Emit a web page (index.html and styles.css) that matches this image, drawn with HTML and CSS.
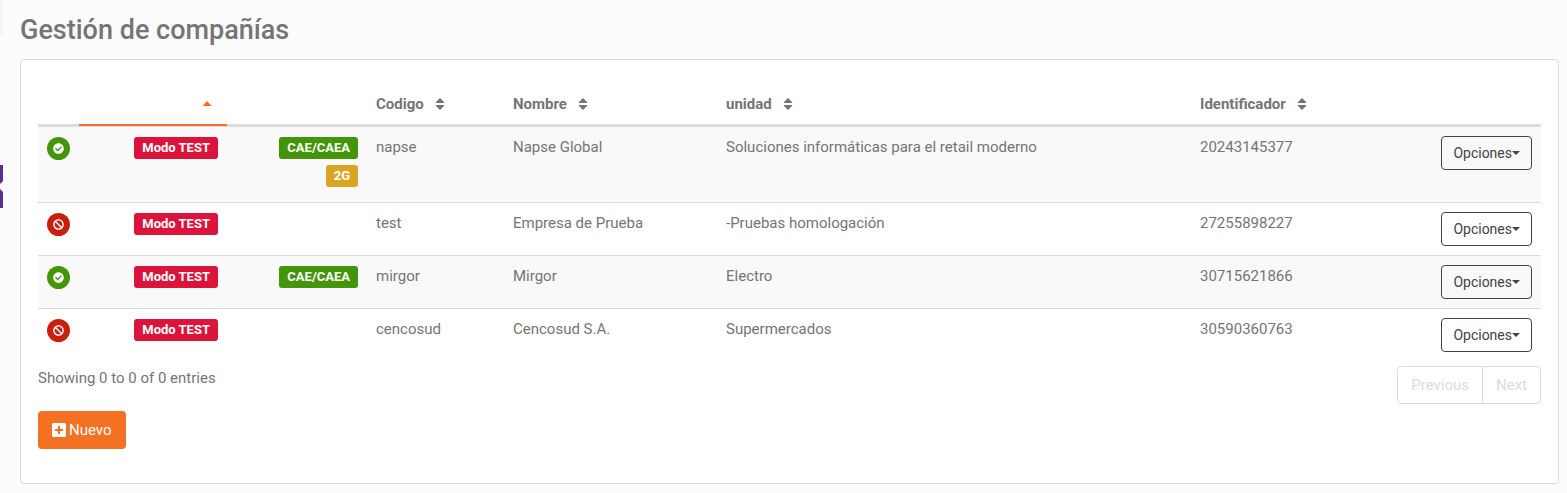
FILE: index.html
```html
<!DOCTYPE html>
<html lang="es">
<head>
<meta charset="utf-8">
<meta name="viewport" content="width=device-width, initial-scale=1">
<title>Gestión de compañías</title>
<link rel="stylesheet" href="styles.css">
</head>
<body>
<svg class="defs" width="0" height="0" aria-hidden="true">
  <symbol id="sort" viewBox="0 0 10 12"><path d="M5 0 9 4q.8 1.100-.4 1.100H1.400Q.2 5.100 1 4zM1.400 6.900h7.200q1.200 0 .4 1.100L5 12 1 8q-.8-1.100.4-1.100z"/></symbol>
  <symbol id="check" viewBox="0 0 512 512"><path d="M504 256c0 137-111 248-248 248S8 393 8 256 119 8 256 8s248 111 248 248zM227 387l184-184c6-6 6-16 0-22l-22-23c-7-6-17-6-23 0L216 308l-70-70c-6-6-16-6-23 0l-22 23c-7 6-7 16 0 22l104 104c6 6 16 6 22 0z"/></symbol>
  <symbol id="ban" viewBox="0 0 512 512"><path d="M256 8C119 8 8 119 8 256s111 248 248 248 248-111 248-248S393 8 256 8zm130 118c66 66 69 165 20 234L152 106c69-49 169-46 234 20zM126 386c-66-66-69-165-20-234l254 254c-69 49-169 46-234-20z"/></symbol>
</svg>
<div class="side-strip" aria-hidden="true"></div>
<svg class="side-tab" width="3" height="43" viewBox="0 0 3 43" aria-hidden="true"><path d="M0 0h3v16L0 19zM0 24l3 3v16H0z"/></svg>
<main class="page">
  <h1 class="title">Gestión de compañías</h1>
  <section class="card">
    <table class="grid">
      <colgroup>
        <col class="c-state"><col class="c-mode"><col class="c-auth"><col class="c-code"><col class="c-name"><col class="c-unit"><col class="c-id"><col class="c-options">
      </colgroup>
      <thead>
        <tr>
          <th></th>
          <th class="sorted right" aria-sort="ascending"><svg class="caret-up" viewBox="0 0 10 5" aria-hidden="true"><path d="M5 0 9.500 5h-9z"/></svg></th>
          <th></th>
          <th>Codigo<svg class="sort" aria-hidden="true"><use href="#sort"/></svg></th>
          <th>Nombre<svg class="sort" aria-hidden="true"><use href="#sort"/></svg></th>
          <th>unidad<svg class="sort" aria-hidden="true"><use href="#sort"/></svg></th>
          <th>Identificador<svg class="sort" aria-hidden="true"><use href="#sort"/></svg></th>
          <th></th>
        </tr>
      </thead>
      <tbody>
        <tr>
          <td><span class="state on"><svg aria-hidden="true"><use href="#check"/></svg></span></td>
          <td><div class="badges"><span class="badge test">Modo TEST</span></div></td>
          <td><div class="badges"><span class="badge cae">CAE/CAEA</span><span class="badge gen">2G</span></div></td>
          <td>napse</td><td>Napse Global</td><td>Soluciones informáticas para el retail moderno</td><td>20243145377</td>
          <td class="right"><button class="options" type="button">Opciones<span class="caret"></span></button></td>
        </tr>
        <tr>
          <td><span class="state off"><svg aria-hidden="true"><use href="#ban"/></svg></span></td>
          <td><div class="badges"><span class="badge test">Modo TEST</span></div></td>
          <td></td>
          <td>test</td><td>Empresa de Prueba</td><td>-Pruebas homologación</td><td>27255898227</td>
          <td class="right"><button class="options" type="button">Opciones<span class="caret"></span></button></td>
        </tr>
        <tr>
          <td><span class="state on"><svg aria-hidden="true"><use href="#check"/></svg></span></td>
          <td><div class="badges"><span class="badge test">Modo TEST</span></div></td>
          <td><div class="badges"><span class="badge cae">CAE/CAEA</span></div></td>
          <td>mirgor</td><td>Mirgor</td><td>Electro</td><td>30715621866</td>
          <td class="right"><button class="options" type="button">Opciones<span class="caret"></span></button></td>
        </tr>
        <tr>
          <td><span class="state off"><svg aria-hidden="true"><use href="#ban"/></svg></span></td>
          <td><div class="badges"><span class="badge test">Modo TEST</span></div></td>
          <td></td>
          <td>cencosud</td><td>Cencosud S.A.</td><td>Supermercados</td><td>30590360763</td>
          <td class="right"><button class="options" type="button">Opciones<span class="caret"></span></button></td>
        </tr>
      </tbody>
    </table>
    <div class="footer">
      <p class="info">Showing 0 to 0 of 0 entries</p>
      <nav class="pager" aria-label="Paginación">
        <button type="button" disabled>Previous</button>
        <button type="button" disabled>Next</button>
      </nav>
    </div>
    <button class="new" type="button"><svg viewBox="0 0 14 14" aria-hidden="true"><path fill-rule="evenodd" d="M1.500 0h11A1.500 1.500 0 0 1 14 1.500v11a1.500 1.500 0 0 1-1.500 1.500h-11A1.500 1.500 0 0 1 0 12.500v-11A1.500 1.500 0 0 1 1.500 0zM6 3v3H3v2h3v3h2V8h3V6H8V3z"/></svg>Nuevo</button>
  </section>
</main>
</body>
</html>
```
FILE: styles.css
```css
* { box-sizing: border-box; }

body {
  margin: 0;
  background: #fcfcfc;
  color: #757575;
  font: 15px/23px Roboto, sans-serif;
}

button { font-family: inherit; }

.defs { position: absolute; }

.side-strip {
  position: absolute;
  top: 0;
  left: 0;
  width: 3px;
  height: 35px;
  background: #f5f5f5;
}

.side-tab {
  position: absolute;
  top: 165px;
  left: 0;
  fill: #5c2d91;
}

.page { padding: 13px 8px 9px 20px; }

.title {
  margin: 0 0 12px;
  font-size: 27px;
  line-height: 34px;
  font-weight: 500;
}

.card {
  padding: 23px 17px 34px;
  background: #fff;
  border: 1px solid #dcdcdc;
  border-radius: 4px;
}

.grid {
  width: 100%;
  table-layout: fixed;
  border-collapse: separate;
  border-spacing: 0;
}

.c-state { width: 41px; }
.c-mode { width: 148px; }
.c-auth { width: 140px; }
.c-code { width: 137px; }
.c-name { width: 213px; }
.c-id { width: 209px; }
.c-options { width: 141px; }

.grid th {
  height: 44px;
  padding: 10px 9px 8px;
  border-bottom: 3px solid #dcdcdc;
  text-align: left;
  font-weight: 700;
  white-space: nowrap;
}

.grid th.sorted {
  padding-right: 15px;
  border-bottom: 0;
  background: linear-gradient(#f47023, #f47023) 0 41px / 100% 2px no-repeat, linear-gradient(#dcdcdc, #dcdcdc) 0 100% / 100% 1px no-repeat;
}

.grid td {
  padding: 9px;
  border-top: 1px solid #dcdcdc;
  vertical-align: top;
}

.grid tbody tr:first-child td { border-top: 0; }
.grid tbody tr:nth-child(odd) { background: #f9f9f9; }
.grid .right { text-align: right; }

.sort {
  width: 10px;
  height: 12px;
  margin-left: 11px;
  vertical-align: -1px;
  fill: #757575;
}

.caret-up {
  width: 10px;
  height: 5px;
  vertical-align: 5px;
  fill: #f47023;
}

.state {
  display: flex;
  align-items: center;
  justify-content: center;
  width: 23px;
  height: 23px;
  margin-top: 1px;
  border-radius: 50%;
}

.state svg {
  width: 11px;
  height: 11px;
  fill: #fff;
}

.on { background: #449509; }
.off { background: #c7200e; }

.badges {
  display: flex;
  flex-direction: column;
  align-items: flex-end;
  gap: 6px;
  padding-top: 1px;
}

.badge {
  padding: 0 8px;
  border-radius: 3px;
  color: #fff;
  font-size: 13px;
  line-height: 22px;
  font-weight: 700;
}

.badges:has(.gen) { padding-bottom: 6px; }

.test { background: #dc143c; }
.cae { background: #449509; }
.gen { background: #daa520; }

.options {
  display: inline-flex;
  align-items: center;
  height: 34px;
  padding: 0 11px;
  border: 1px solid #444;
  border-radius: 4px;
  background: transparent;
  color: #444;
  font-size: 14px;
  vertical-align: top;
}

.caret {
  border: 4px solid transparent;
  border-top-color: #444;
  border-bottom: 0;
}

.footer {
  display: flex;
  align-items: flex-start;
  justify-content: space-between;
  padding-top: 5px;
}

.info {
  margin: 0;
  padding-top: 1px;
}

.pager {
  display: flex;
  border: 1px solid #dcdcdc;
  border-radius: 4px;
}

.pager button {
  height: 36px;
  padding: 0 13px;
  border: 0;
  background: transparent;
  color: #dcdcdc;
  font-size: 15px;
}

.pager button + button { border-left: 1px solid #dcdcdc; }

.new {
  display: flex;
  align-items: center;
  gap: 3px;
  height: 38px;
  margin-top: 7px;
  padding: 0 14px;
  border: 0;
  border-radius: 4px;
  background: #f47023;
  color: #fff;
  font-size: 15px;
}

.new svg {
  width: 14px;
  height: 14px;
  fill: #fff;
}
```
